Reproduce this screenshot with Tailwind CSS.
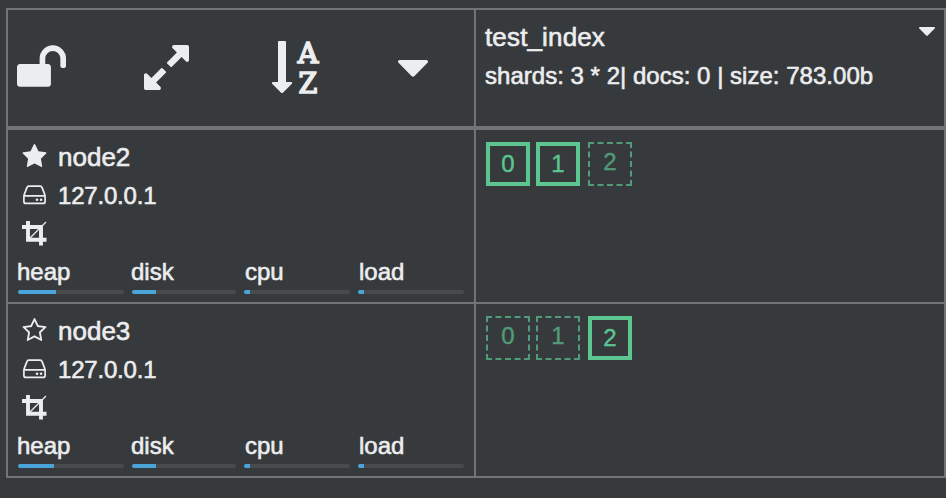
<!DOCTYPE html>
<html lang="en">
<head>
<meta charset="utf-8">
<title>Cluster overview</title>
<script src="https://cdn.jsdelivr.net/npm/@tailwindcss/browser@4"></script>
</head>
<body class="h-[498px] w-[946px] overflow-hidden bg-[#373a3c] pl-[6px] pt-[8px] font-['Liberation_Sans',sans-serif] text-[24px] leading-[38px] text-[#ecedef] [-webkit-text-stroke:0.6px]">
<svg class="hidden">
  <symbol id="caret" viewBox="0 0 30 17"><path d="M1.500 0h27q2.500 .8 1 2.800L16.500 16q-1.500 1.300-3 0L.5 2.800Q-1 .8 1.500 0z" fill="currentColor"/></symbol>
  <symbol id="star" viewBox="0 32 1664 1588"><path fill="currentColor" d="M1664 647q0 22-26 48l-363 354 86 500q1 7 1 20 0 21-10.500 35.500t-30.500 14.500q-19 0-40-12l-449-236-449 236q-22 12-40 12-21 0-31.500-14.500t-10.500-35.500q0-6 2-20l86-500-364-354q-25-27-25-48 0-37 56-46l502-73 225-455q19-41 49-41t49 41l225 455 502 73q56 9 56 46z"/></symbol>
  <symbol id="star-o" viewBox="0 32 1664 1588"><path fill="currentColor" fill-rule="evenodd" d="M1137 1004l306-297-422-62-189-382-189 382-422 62 306 297-73 421 378-199 377 199zM1664 647q0 22-26 48l-363 354 86 500q1 7 1 20 0 50-41 50-19 0-40-12l-449-236-449 236q-22 12-40 12-21 0-31.500-14.500t-10.500-35.500q0-6 2-20l86-500-364-354q-25-27-25-48 0-37 56-46l502-73 225-455q19-41 49-41t49 41l225 455 502 73q56 9 56 46z"/></symbol>
  <symbol id="hdd" viewBox="0 0 24 20"><path d="M1.400 11.500v4.900q0 2 2 2h17.200q2 0 2-2v-4.900q0-1-.5-2.400L19.700 2.900q-.5-1.700-2.200-1.700H6.500Q4.800 1.200 4.300 2.900L1.900 9.100q-.5 1.400-.5 2.400zM1.500 10.800h21" fill="none" stroke="currentColor" stroke-width="1.700"/><circle cx="14.500" cy="14.700" r="1.300" fill="currentColor"/><circle cx="18.600" cy="14.700" r="1.300" fill="currentColor"/></symbol>
  <symbol id="crop" viewBox="0 0 25 25"><path d="M6 0v18.700h18.500M0 6h19v18.500" fill="none" stroke="currentColor" stroke-width="3.900"/><path d="M7.500 17.500L24 1" stroke="currentColor" stroke-width="1.200"/></symbol>
</svg>
<main class="grid h-[470px] w-[940px] grid-cols-[468px_470px] grid-rows-[122px_174px_174px] border-l-2 border-[#707476]">
  <div class="flex items-start border-y-2 border-r-2 border-b-4 border-[#707476]">
    <svg class="ml-[9px] mt-[35px] h-[42px] w-[49px]" viewBox="0 128 1664 1408"><path fill="currentColor" d="M1664 576v256q0 26-19 45t-45 19h-64q-26 0-45-19t-19-45v-256q0-106-75-181t-181-75-181 75-75 181v192h96q40 0 68 28t28 68v576q0 40-28 68t-68 28h-960q-40 0-68-28t-28-68v-576q0-40 28-68t68-28h672v-192q0-185 131.500-316.500t316.500-131.500 316.500 131.500 131.500 316.500z"/></svg>
    <svg class="ml-[78px] mt-[35px] size-[45px]" viewBox="0 128 1536 1536"><path fill="currentColor" d="M755 1056q0 13-10 23l-332 332 144 144q19 19 19 45t-19 45-45 19h-448q-26 0-45-19t-19-45v-448q0-26 19-45t45-19 45 19l144 144 332-332q10-10 23-10t23 10l114 114q10 10 10 23zm781-864v448q0 26-19 45t-45 19-45-19l-144-144-332 332q-10 10-23 10t-23-10l-114-114q-10-10-10-23t10-23l332-332-144-144q-19-19-19-45t19-45 45-19h448q26 0 45 19t19 45z"/></svg>
    <svg class="ml-[83px] mt-[31px] h-[54px] w-[48px] overflow-visible font-['DejaVu_Serif',serif]" viewBox="0 0 48 54"><path fill="currentColor" d="M7 0h6q1 0 1 1v40h5.500q1.200 .6 .4 1.700l-9 9q-.9 .8-1.800 0l-9-9Q-.6 41.600 .6 41H6V1q0-1 1-1z"/><text x="25.800" y="22" font-size="28.500" textLength="20.500" lengthAdjust="spacingAndGlyphs" fill="currentColor" stroke="currentColor" stroke-width="1.700">A</text><text x="26.500" y="51.700" font-size="28.500" textLength="18.800" lengthAdjust="spacingAndGlyphs" fill="currentColor" stroke="currentColor" stroke-width="1.700">Z</text></svg>
    <svg class="ml-[78px] mt-[50px] h-[17px] w-[30px]"><use href="#caret"/></svg>
  </div>
  <div class="border-y-2 border-r-2 border-b-4 border-[#707476] pl-[9px] pr-[9px] pt-[9px]">
    <div class="flex h-[38px] items-start justify-between"><span class="-mt-px text-[26px] tracking-[0.15px]">test_index</span><svg class="mt-[8px] h-[9px] w-[16px]"><use href="#caret"/></svg></div>
    <div class="whitespace-pre tracking-[0.02px]">shards: 3 * 2| docs: 0 | size: 783.00b</div>
  </div>

  <div class="border-b-2 border-r-2 border-[#707476] pl-[10px] pt-[8px]">
    <div class="flex h-[38px] items-start pl-[4px]"><svg class="mt-[6px] h-[23px] w-[25px]"><use href="#star"/></svg><span class="ml-[11px] text-[26px]">node2</span></div>
    <div class="flex h-[39px] items-start pl-[4px]"><svg class="mt-[9px] h-[20px] w-[25px]"><use href="#hdd"/></svg><span class="ml-[11px] mt-px tracking-[-0.2px]">127.0.0.1</span></div>
    <div class="flex h-[38px] items-start pl-[4px]"><svg class="mt-[6px] size-[25px]"><use href="#crop"/></svg></div>
    <div class="grid grid-cols-[114px_112px_114px_106px]">
      <div><div class="-ml-px h-[37px]">heap</div><div class="h-[4px] w-[106px] overflow-hidden rounded-sm bg-[#484a4c]"><div class="h-full bg-[#4aa3d9]" style="width:38px"></div></div></div>
      <div><div class="-ml-px h-[37px]">disk</div><div class="h-[4px] w-[104px] overflow-hidden rounded-sm bg-[#484a4c]"><div class="h-full bg-[#4aa3d9]" style="width:24px"></div></div></div>
      <div><div class="h-[37px] pl-px">cpu</div><div class="h-[4px] w-[106px] overflow-hidden rounded-sm bg-[#484a4c]"><div class="h-full bg-[#4aa3d9]" style="width:6px"></div></div></div>
      <div><div class="h-[37px] pl-px">load</div><div class="h-[4px] w-[106px] overflow-hidden rounded-sm bg-[#484a4c]"><div class="h-full bg-[#4aa3d9]" style="width:6px"></div></div></div>
    </div>
  </div>
  <div class="flex items-start border-b-2 border-r-2 border-[#707476] pl-[10px] pt-[12px] text-center leading-[36px] text-[#5cc691] [-webkit-text-stroke:0.4px]">
    <div class="size-[44px] border-4 border-[#5cc691]">0</div>
    <div class="ml-[6px] size-[44px] border-4 border-[#5cc691]">1</div>
    <div class="ml-[8px] size-[44px] border-2 border-dashed border-[#519b78] text-[#519b78]">2</div>
  </div>

  <div class="border-b-2 border-r-2 border-[#707476] pl-[10px] pt-[8px]">
    <div class="flex h-[38px] items-start pl-[4px]"><svg class="mt-[6px] h-[23px] w-[25px]"><use href="#star-o"/></svg><span class="ml-[11px] text-[26px]">node3</span></div>
    <div class="flex h-[39px] items-start pl-[4px]"><svg class="mt-[9px] h-[20px] w-[25px]"><use href="#hdd"/></svg><span class="ml-[11px] mt-px tracking-[-0.2px]">127.0.0.1</span></div>
    <div class="flex h-[38px] items-start pl-[4px]"><svg class="mt-[6px] size-[25px]"><use href="#crop"/></svg></div>
    <div class="grid grid-cols-[114px_112px_114px_106px]">
      <div><div class="-ml-px h-[37px]">heap</div><div class="h-[4px] w-[106px] overflow-hidden rounded-sm bg-[#484a4c]"><div class="h-full bg-[#4aa3d9]" style="width:36px"></div></div></div>
      <div><div class="-ml-px h-[37px]">disk</div><div class="h-[4px] w-[104px] overflow-hidden rounded-sm bg-[#484a4c]"><div class="h-full bg-[#4aa3d9]" style="width:24px"></div></div></div>
      <div><div class="h-[37px] pl-px">cpu</div><div class="h-[4px] w-[106px] overflow-hidden rounded-sm bg-[#484a4c]"><div class="h-full bg-[#4aa3d9]" style="width:6px"></div></div></div>
      <div><div class="h-[37px] pl-px">load</div><div class="h-[4px] w-[106px] overflow-hidden rounded-sm bg-[#484a4c]"><div class="h-full bg-[#4aa3d9]" style="width:6px"></div></div></div>
    </div>
  </div>
  <div class="flex items-start border-b-2 border-r-2 border-[#707476] pl-[10px] pt-[12px] text-center leading-[36px] text-[#5cc691] [-webkit-text-stroke:0.4px]">
    <div class="size-[44px] border-2 border-dashed border-[#519b78] text-[#519b78]">0</div>
    <div class="ml-[6px] size-[44px] border-2 border-dashed border-[#519b78] text-[#519b78]">1</div>
    <div class="ml-[8px] size-[44px] border-4 border-[#5cc691]">2</div>
  </div>
</main>
</body>
</html>
